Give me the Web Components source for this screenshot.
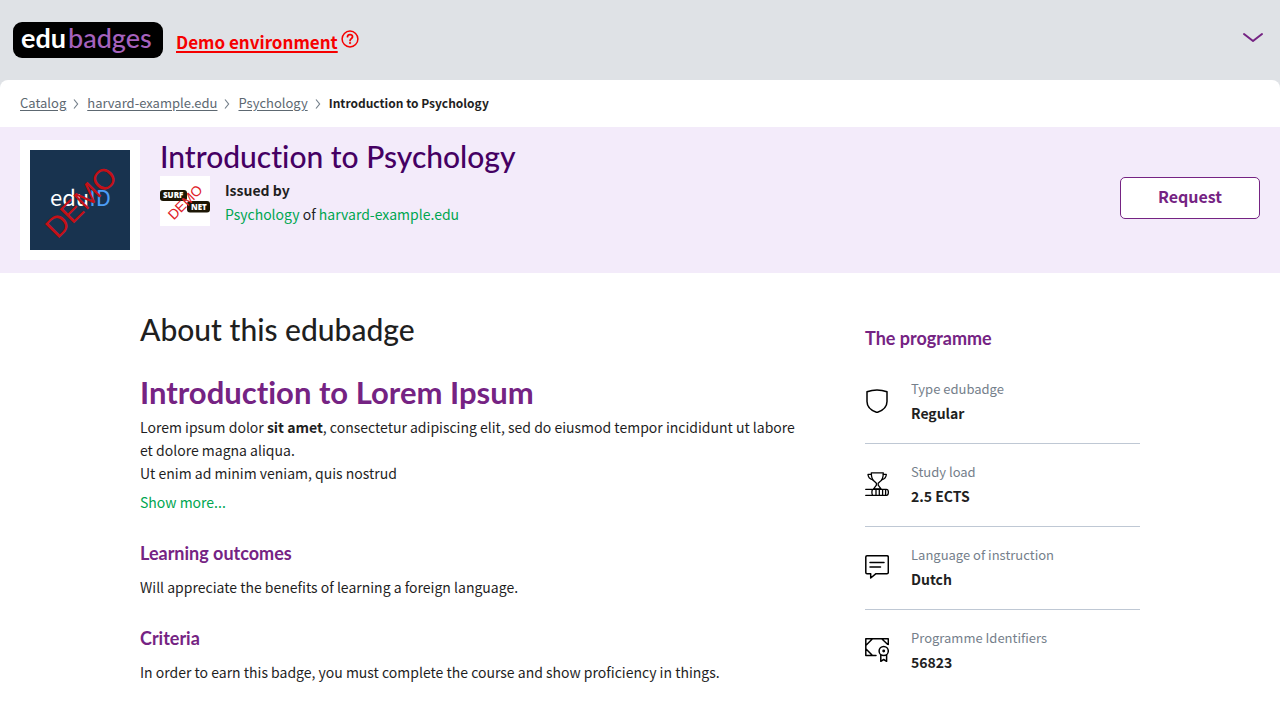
<!DOCTYPE html>
<html lang="en">
<head>
<meta charset="utf-8">
<meta name="viewport" content="width=device-width, initial-scale=1">
<title>Introduction to Psychology - edubadges</title>
<style>
  :root {
    --purple: #752383;
    --purple-dark: #450063;
    --green: #00a651;
    --text: #1f1f1f;
    --grey: #75808b;
    --heading: Lato, "Open Sans", sans-serif;
  }
  body {
    margin: 0;
    background: #dfe2e6;
    color: var(--text);
    font: 14px/24px "Noto Sans CJK SC", "Noto Sans", sans-serif;
  }
</style>
</head>
<body>
<badge-page></badge-page>

<script>
const define = (name, html) => {
  const template = document.createElement('template');
  template.innerHTML = html;
  customElements.define(name, class extends HTMLElement {
    constructor() {
      super();
      this.attachShadow({ mode: 'open' }).append(template.content.cloneNode(true));
    }
  });
};

define('edu-logo', `
  <style>
    :host { display: block; width: 150px; height: 36px; }
    svg { display: block; }
    text { font: 700 27px Lato, sans-serif; }
    .light { font-weight: 500; }
  </style>
  <svg width="150" height="36" viewBox="0 0 150 36" role="img" aria-label="edubadges">
    <rect width="150" height="36" rx="9" fill="#000"/>
    <text x="8" y="26" fill="#fff">edu</text>
    <text class="light" x="55" y="26" fill="#a662bd">badges</text>
  </svg>`);

define('top-bar', `
  <style>
    :host { display: flex; align-items: center; height: 80px; padding: 0 16px 0 13px; box-sizing: border-box; }
    .demo { display: flex; align-items: center; gap: 3px; margin: 3px auto 0 13px; color: #f60000; }
    .demo a { color: inherit; font-size: 17px; font-weight: 700; text-underline-offset: 2px; text-decoration-thickness: 2px; }
    .demo svg { display: block; margin-bottom: 6px; }
    button { display: block; border: 0; padding: 0; background: none; height: 12px; margin-bottom: 4px; }
    button svg { display: block; }
  </style>
  <edu-logo></edu-logo>
  <span class="demo">
    <a href="#demo">Demo environment</a>
    <svg width="18" height="18" viewBox="0 0 18 18" fill="none" stroke="currentColor" stroke-width="1.5" stroke-linecap="round" aria-hidden="true">
      <circle cx="9" cy="9" r="7.900"/>
      <path d="M6.500 6.700C6.700 3.700 11.700 3.900 11.500 6.900C11.400 8.700 9.100 8.600 9.100 10.600" stroke-width="1.800"/>
      <circle cx="9.100" cy="13.100" r=".4"/>
    </svg>
  </span>
  <button type="button" aria-label="Open menu">
    <svg width="22" height="12" viewBox="0 0 22 12" fill="none" stroke="#752383" stroke-width="2" stroke-linecap="round" stroke-linejoin="round">
      <path d="M2 2L11 9L20 2"/>
    </svg>
  </button>`);

define('crumb-item', `
  <style>
    :host { display: flex; align-items: center; }
    a { color: #5d6871; text-underline-offset: 2px; }
    svg { display: block; margin: 2px 8px 0 7px; }
  </style>
  <a href="#"><slot></slot></a>
  <svg width="6" height="10" viewBox="0 0 6 10" fill="none" stroke="#75808b" stroke-width="1.2" aria-hidden="true"><path d="M1 .5L4.600 5L1 9.500"/></svg>`);

define('bread-crumbs', `
  <style>
    :host { display: block; padding: 11px 20px 12px; background: #fff; border-radius: 8px 8px 0 0; font-size: 13px; }
    nav { display: flex; align-items: center; }
    b { font-size: 12px; }
  </style>
  <nav aria-label="Breadcrumb">
    <crumb-item>Catalog</crumb-item>
    <crumb-item>harvard-example.edu</crumb-item>
    <crumb-item>Psychology</crumb-item>
    <b aria-current="page">Introduction to Psychology</b>
  </nav>`);

define('badge-image', `
  <style>
    :host { display: block; padding: 10px; background: #fff; }
    svg { display: block; }
    text { font: 22px "Noto Sans CJK SC", sans-serif; }
    .demo { font: 29px "Liberation Sans", sans-serif; }
  </style>
  <svg width="100" height="100" viewBox="0 0 100 100" role="img" aria-label="eduID badge">
    <rect width="100" height="100" fill="#18334f"/>
    <text x="20" y="56" fill="#fff">edu<tspan fill="#4d9ef6">ID</tspan></text>
    <text class="demo" x="51" y="62" text-anchor="middle" fill="#c41017" transform="rotate(-45 51 52)">DEMO</text>
  </svg>`);

define('issuer-logo', `
  <style>
    :host { display: block; background: #fff; }
    svg { display: block; }
    text { font: 800 8px "Open Sans", sans-serif; fill: #fff; }
    .demo { font: 14px "Liberation Sans", sans-serif; fill: #e02027; }
  </style>
  <svg width="50" height="50" viewBox="0 0 50 50" role="img" aria-label="SURFnet">
    <rect y="14" width="27" height="11" rx="3" fill="#1c1605"/>
    <rect x="27" y="25" width="23" height="11.500" rx="3" fill="#1c1605"/>
    <text x="3" y="22">SURF</text>
    <text x="31" y="34">NET</text>
    <text class="demo" x="25" y="31" text-anchor="middle" transform="rotate(-45 25 26)">DEMO</text>
  </svg>`);

define('badge-hero', `
  <style>
    :host { display: flex; align-items: flex-start; gap: 20px; padding: 13px 20px; background: #f3ebfa; }
    .info { flex: 1; }
    h1 { margin: 0; padding-bottom: 4px; color: var(--purple-dark); font: 500 30px/32px var(--heading); font-variant-ligatures: none; }
    .issuer { display: flex; align-items: flex-start; gap: 15px; }
    p { margin: 2px 0 0; }
    a { color: var(--green); text-decoration: none; }
    button { align-self: center; width: 140px; height: 42px; margin-top: -4px; padding: 0 0 4px; border: 1px solid var(--purple); border-radius: 5px;
      background: #fff; color: var(--purple); font: 700 16px/24px "Noto Sans CJK SC", sans-serif; }
  </style>
  <badge-image></badge-image>
  <div class="info">
    <h1>Introduction to Psychology</h1>
    <div class="issuer">
      <issuer-logo></issuer-logo>
      <p><b>Issued by</b><br><a href="#">Psychology</a> of <a href="#">harvard-example.edu</a></p>
    </div>
  </div>
  <button type="button">Request</button>`);

define('text-section', `
  <style>
    :host { display: block; margin-top: 27px; }
    h3 { margin: 0 0 10px; color: var(--purple); font: 700 18px/24px var(--heading); font-variant-ligatures: none; }
    p { margin: 0; }
  </style>
  <h3><slot name="title"></slot></h3>
  <p><slot></slot></p>`);

define('badge-about', `
  <style>
    :host { display: block; }
    h2 { margin: 0; font: 500 30px/36px var(--heading); font-variant-ligatures: none; }
    .intro { margin: 25px 0 0; color: var(--purple); font-weight: 700; font-size: 31px; line-height: 40px; }
    p { margin: 4px 0 5px; line-height: 23px; }
    a { color: var(--green); text-decoration: none; }
  </style>
  <h2>About this edubadge</h2>
  <h2 class="intro">Introduction to Lorem Ipsum</h2>
  <p>Lorem ipsum dolor <b>sit amet</b>, consectetur adipiscing elit, sed do eiusmod tempor incididunt ut labore et dolore magna aliqua.<br>Ut enim ad minim veniam, quis nostrud</p>
  <a href="#more">Show more...</a>
  <text-section><span slot="title">Learning outcomes</span>Will appreciate the benefits of learning a foreign language.</text-section>
  <text-section><span slot="title">Criteria</span>In order to earn this badge, you must complete the course and show proficiency in things.</text-section>`);

define('programme-item', `
  <style>
    :host { display: flex; align-items: center; gap: 22px; padding: 16px 0 18px; border-bottom: 1px solid #bfc8d4; }
    :host(:last-of-type) { border: 0; }
    .label { color: var(--grey); font-size: 13px; }
    .value { font-weight: 700; }
    div div { line-height: 24px; }
  </style>
  <slot name="icon"></slot>
  <div><div class="label"><slot name="label"></slot></div><div class="value"><slot></slot></div></div>`);

define('badge-programme', `
  <style>
    :host { display: block; padding-top: 15px; }
    h3 { margin: 0 0 11px; color: var(--purple); font: 700 18px/24px var(--heading); font-variant-ligatures: none; }
    svg { display: block; fill: none; stroke: #000; stroke-width: 1.5; stroke-linejoin: round; stroke-linecap: round; }
  </style>
  <h3>The programme</h3>
  <programme-item>
    <svg slot="icon" width="24" height="24" viewBox="0 0 24 24" aria-hidden="true"><path d="M2 2.800Q12-1 22 2.800V12.500C22 18 18 21.500 12 23.500C6 21.500 2 18 2 12.500Z"/></svg>
    <span slot="label">Type edubadge</span>Regular
  </programme-item>
  <programme-item>
    <svg slot="icon" width="24" height="24" viewBox="0 0 24 24" style="stroke-width:1.3" aria-hidden="true">
      <path d="M6.300 .8H18.300C18.300 6 17 8.500 14.800 9.700L13.200 11.200V13.200L16 16.800H8.600L11.400 13.200V11.200L9.800 9.700C7.500 8.500 6.300 6 6.300 .8Z"/>
      <path d="M6.300 2.300H3C3 5.500 4.500 7 8 8M18.300 2.300H21.300C21.300 5.500 20 7 16.600 8"/>
      <path d="M.7 17.300H21.500C24 17.300 24 23.300 21.500 23.300H.7M7.500 17.300Q6.300 20.300 7.500 23.300M11 17.500V23M14.300 17.500V23M17.600 17.500V23M20.600 17.500V23"/>
    </svg>
    <span slot="label">Study load</span>2.5 ECTS
  </programme-item>
  <programme-item>
    <svg slot="icon" width="24" height="24" viewBox="0 0 24 24" aria-hidden="true"><path d="M2 .8H22Q23.300 .8 23.300 2V17.500Q23.300 18.700 22 18.700H11L5.700 23V18.700H2Q.8 18.700 .8 17.500V2Q.8 .8 2 .8ZM5 7.500H19M5 12H15.500"/></svg>
    <span slot="label">Language of instruction</span>Dutch
  </programme-item>
  <programme-item>
    <svg slot="icon" width="24" height="24" viewBox="0 0 24 24" aria-hidden="true">
      <path d="M11 17.500H.8V.8H23.300V6.500M.8 7.500L7.500 .8M.8 10.800L7.500 17.500M16.700 .8L22.500 6.300"/>
      <circle cx="18.700" cy="13" r="4.600"/><circle cx="18.700" cy="13" r=".7"/>
      <path d="M15.800 17V23.300L18.700 21.500L21.600 23.300V17"/>
    </svg>
    <span slot="label">Programme Identifiers</span>56823
  </programme-item>`);

define('badge-page', `
  <style>
    :host { display: block; }
    main { background: #fff; }
    .content { display: grid; grid-template-columns: minmax(0, 1fr) 275px; gap: 64px; max-width: 1000px; margin: 0 auto; padding: 38px 20px 30px; }
  </style>
  <top-bar></top-bar>
  <bread-crumbs></bread-crumbs>
  <main>
    <badge-hero></badge-hero>
    <div class="content">
      <badge-about></badge-about>
      <badge-programme></badge-programme>
    </div>
  </main>`);
</script>
</body>
</html>
